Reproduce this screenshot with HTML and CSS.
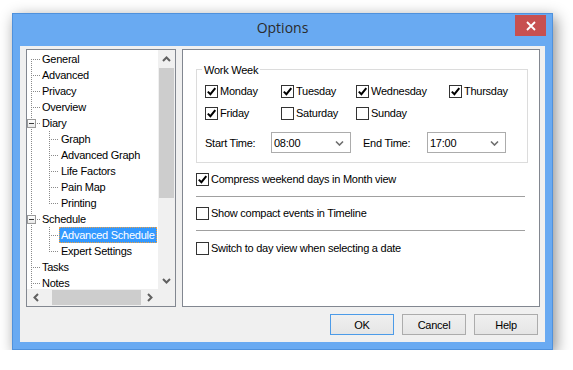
FILE: index.html
```html
<!DOCTYPE html>
<html lang="en">
<head>
<meta charset="UTF-8">
<meta name="viewport" content="width=device-width, initial-scale=1.0">
<title>Options</title>
<link rel="stylesheet" href="styles.css">
</head>
<body>
<div class="window">
    <div class="titlebar">
        <span></span>
        <div class="title">Options</div>
        <button class="close">
            <svg width="10" height="10" viewBox="0 0 10 10"><path d="M1 1 L9 9 M9 1 L1 9" stroke="#fff" stroke-width="1.8" fill="none"/></svg>
        </button>
    </div>

    <div class="content">
        <div class="panes">
            <!-- tree on the left -->
            <div class="tree">
                <div class="tree-view">
                    <div class="node root first"><span class="elbow"></span><span class="label">General</span></div>
                    <div class="node root"><span class="elbow"></span><span class="label">Advanced</span></div>
                    <div class="node root"><span class="elbow"></span><span class="label">Privacy</span></div>
                    <div class="node root"><span class="elbow"></span><span class="label">Overview</span></div>
                    <div class="node root open"><span class="elbow"></span><span class="label">Diary</span></div>
                    <div class="node child"><span class="elbow"></span><span class="label">Graph</span></div>
                    <div class="node child"><span class="elbow"></span><span class="label">Advanced Graph</span></div>
                    <div class="node child"><span class="elbow"></span><span class="label">Life Factors</span></div>
                    <div class="node child"><span class="elbow"></span><span class="label">Pain Map</span></div>
                    <div class="node child last"><span class="elbow"></span><span class="label">Printing</span></div>
                    <div class="node root open"><span class="elbow"></span><span class="label">Schedule</span></div>
                    <div class="node child"><span class="elbow"></span><span class="label selected">Advanced Schedule</span></div>
                    <div class="node child last"><span class="elbow"></span><span class="label">Expert Settings</span></div>
                    <div class="node root"><span class="elbow"></span><span class="label">Tasks</span></div>
                    <div class="node root"><span class="elbow"></span><span class="label">Notes</span></div>
                </div>
                <div class="vscroll">
                    <span class="arrow"><svg width="9" height="6" viewBox="0 0 9 6"><path d="M1 5 L4.5 1.5 L8 5" fill="none" stroke="#606060" stroke-width="2"/></svg></span>
                    <span class="track"><span class="thumb"></span></span>
                    <span class="arrow"><svg width="9" height="6" viewBox="0 0 9 6"><path d="M1 1 L4.5 4.5 L8 1" fill="none" stroke="#606060" stroke-width="2"/></svg></span>
                </div>
                <div class="hscroll">
                    <span class="arrow"><svg width="6" height="9" viewBox="0 0 6 9"><path d="M5 1 L1.5 4.5 L5 8" fill="none" stroke="#606060" stroke-width="2"/></svg></span>
                    <span class="track"><span class="thumb"></span></span>
                    <span class="arrow"><svg width="6" height="9" viewBox="0 0 6 9"><path d="M1 1 L4.5 4.5 L1 8" fill="none" stroke="#606060" stroke-width="2"/></svg></span>
                </div>
                <div class="corner"></div>
            </div>

            <!-- settings page -->
            <div class="page">
                <div class="group">
                    <div class="group-title"><span>Work Week</span></div>
                    <div class="days">
                        <label class="check"><span class="cb on"></span>Monday</label>
                        <label class="check"><span class="cb on"></span>Tuesday</label>
                        <label class="check"><span class="cb on"></span>Wednesday</label>
                        <label class="check"><span class="cb on"></span>Thursday</label>
                        <label class="check"><span class="cb on"></span>Friday</label>
                        <label class="check"><span class="cb"></span>Saturday</label>
                        <label class="check"><span class="cb"></span>Sunday</label>
                    </div>
                    <div class="time-row">
                        <span class="time-label">Start Time:</span>
                        <div class="combo"><span>08:00</span><svg width="9" height="6" viewBox="0 0 9 6"><path d="M1 1.5 L4.5 5 L8 1.5" fill="none" stroke="#6d6d6d" stroke-width="1.6"/></svg></div>
                        <span class="time-label end">End Time:</span>
                        <div class="combo narrow"><span>17:00</span><svg width="9" height="6" viewBox="0 0 9 6"><path d="M1 1.5 L4.5 5 L8 1.5" fill="none" stroke="#6d6d6d" stroke-width="1.6"/></svg></div>
                    </div>
                </div>

                <label class="check opt"><span class="cb on"></span>Compress weekend days in Month view</label>
                <div class="sep"></div>
                <label class="check opt"><span class="cb"></span>Show compact events in Timeline</label>
                <div class="sep"></div>
                <label class="check opt last"><span class="cb"></span>Switch to day view when selecting a date</label>
            </div>
        </div>

        <div class="buttons">
            <button class="btn default">OK</button>
            <button class="btn">Cancel</button>
            <button class="btn">Help</button>
        </div>
    </div>
</div>
</body>
</html>
```

FILE: styles.css
```css
/* Options dialog */
body {
    margin: 0;
    background: #fff;
    font-family: "Liberation Sans", Arial, sans-serif;
    font-size: 11px;
    letter-spacing: -0.25px;
    color: #000;
}

.window {
    width: 541px;
    margin: 13px 0 0 12px;
    box-sizing: border-box;
    border: 1px solid #4f91dc;
    background: #69aaf2;
    padding: 0 7px 7px;
    box-shadow: 3px 4px 14px rgba(0, 0, 0, 0.45);
}

.titlebar {
    height: 32px;
    margin: 0 -7px;
    display: grid;
    grid-template-columns: 1fr auto 1fr;
    align-items: start;
}

.title {
    font-family: "Open Sans", sans-serif;
    font-size: 14px;
    letter-spacing: 0;
    line-height: 20px;
    padding-top: 4px;
    color: #2b2b2b;
}

.close {
    justify-self: end;
    width: 31px;
    height: 21px;
    margin: 1px 6px 0 0;
    padding: 0;
    border: none;
    background: #c75050;
    display: flex;
    align-items: center;
    justify-content: center;
}

.content {
    height: 296px;
    box-sizing: border-box;
    background: #f0f0f0;
    padding: 3px 5px 0 6px;
}

.panes {
    display: flex;
    gap: 6px;
    height: 258px;
}

/* tree */
.tree {
    width: 150px;
    box-sizing: border-box;
    border: 1px solid #828790;
    background: #fff;
    display: grid;
    grid-template-columns: 1fr 17px;
    grid-template-rows: 1fr 17px;
}

.tree-view {
    overflow: hidden;
    padding-top: 1px;
}

.node {
    display: flex;
    height: 16px;
    line-height: 16px;
    white-space: nowrap;
}

.elbow {
    position: relative;
    flex: none;
}

.root .elbow {
    width: 13px;
    background:
        repeating-linear-gradient(to bottom, #8a8a8a 0 1px, transparent 1px 2px) 4px 0 / 1px 100% no-repeat,
        repeating-linear-gradient(to right, #8a8a8a 0 1px, transparent 1px 2px) 6px 8px / 7px 1px no-repeat;
}

.root.first .elbow {
    background:
        repeating-linear-gradient(to bottom, #8a8a8a 0 1px, transparent 1px 2px) 4px 8px / 1px 8px no-repeat,
        repeating-linear-gradient(to right, #8a8a8a 0 1px, transparent 1px 2px) 6px 8px / 7px 1px no-repeat;
}

.root.open .elbow::before {
    content: "";
    position: absolute;
    left: 0;
    top: 4px;
    width: 9px;
    height: 9px;
    box-sizing: border-box;
    border: 1px solid #9a9a9a;
    background: linear-gradient(#fff, #e8e8e8);
}

.root.open .elbow::after {
    content: "";
    position: absolute;
    left: 2px;
    top: 8px;
    width: 5px;
    height: 1px;
    background: #3a3a3a;
}

.child .elbow {
    width: 32px;
    background:
        repeating-linear-gradient(to bottom, #8a8a8a 0 1px, transparent 1px 2px) 4px 0 / 1px 100% no-repeat,
        repeating-linear-gradient(to bottom, #8a8a8a 0 1px, transparent 1px 2px) 22px 0 / 1px 100% no-repeat,
        repeating-linear-gradient(to right, #8a8a8a 0 1px, transparent 1px 2px) 24px 8px / 7px 1px no-repeat;
}

.child.last .elbow {
    background:
        repeating-linear-gradient(to bottom, #8a8a8a 0 1px, transparent 1px 2px) 4px 0 / 1px 100% no-repeat,
        repeating-linear-gradient(to bottom, #8a8a8a 0 1px, transparent 1px 2px) 22px 0 / 1px 9px no-repeat,
        repeating-linear-gradient(to right, #8a8a8a 0 1px, transparent 1px 2px) 24px 8px / 7px 1px no-repeat;
}

.label {
    padding: 0 2px;
}

.label.selected {
    background: #3399ff;
    color: #fff;
    outline: 1px dotted #f0a040;
    outline-offset: -1px;
}

/* scrollbars */
.vscroll,
.hscroll,
.corner {
    background: #f0f0f0;
}

.vscroll {
    display: flex;
    flex-direction: column;
}

.hscroll {
    display: flex;
}

.arrow {
    flex: none;
    width: 17px;
    height: 17px;
    display: flex;
    align-items: center;
    justify-content: center;
}

.vscroll .track {
    flex: 1;
    padding: 1px 1px 0;
}

.vscroll .thumb {
    display: block;
    height: 130px;
    background: #cdcdcd;
}

.hscroll .track {
    flex: 1;
    display: flex;
    justify-content: flex-end;
    padding: 1px 0;
}

.hscroll .thumb {
    width: 89px;
    background: #cdcdcd;
}

/* settings page */
.page {
    flex: 1;
    border: 1px solid #828790;
    background: #fff;
}

.group {
    margin: 19px 11px 0 13px;
    border: 1px solid #dcdcdc;
    padding: 0 8px 9px;
}

.group-title {
    margin: -8px 0 0 -3px;
    line-height: 16px;
}

.group-title span {
    background: #fff;
    padding: 0 2px;
}

.days {
    display: grid;
    grid-template-columns: 76px 75px 93px auto;
    row-gap: 6px;
    margin-top: 5px;
}

.check {
    display: flex;
    align-items: center;
    gap: 2px;
    height: 16px;
    white-space: nowrap;
}

.cb {
    flex: none;
    width: 13px;
    height: 13px;
    box-sizing: border-box;
    border: 1px solid #333;
    background: #fff;
}

.cb.on {
    background: #fff url("data:image/svg+xml,%3Csvg xmlns='http://www.w3.org/2000/svg' width='11' height='11' viewBox='0 0 11 11'%3E%3Cpath d='M1.8 5.6 L4.4 8.2 L9.3 2.2' fill='none' stroke='%23000' stroke-width='2'/%3E%3C/svg%3E") no-repeat 0 0;
}

.time-row {
    display: flex;
    align-items: center;
    margin-top: 11px;
}

.time-label {
    width: 66px;
}

.time-label.end {
    width: 64px;
    margin-left: 12px;
}

.combo {
    width: 80px;
    height: 21px;
    box-sizing: border-box;
    border: 1px solid #acacac;
    background: #fff;
    display: flex;
    align-items: center;
    justify-content: space-between;
    padding: 0 6px 0 2px;
}

.combo.narrow {
    width: 79px;
}

.opt {
    margin: 8px 14px 0 13px;
}

.opt.last {
    margin-top: 9px;
}

.sep {
    height: 1px;
    background: #a0a0a0;
    margin: 9px 14px 0 13px;
}

/* buttons */
.buttons {
    display: flex;
    justify-content: flex-end;
    gap: 8px;
    margin-top: 7px;
    padding-right: 2px;
}

.btn {
    width: 64px;
    height: 21px;
    padding: 0;
    border: 1px solid #acacac;
    background: linear-gradient(#f0f0f0, #e5e5e5);
    font-family: inherit;
    font-size: 11px;
    letter-spacing: -0.25px;
    color: #000;
}

.btn.default {
    border-color: #4c9be8;
}
```
